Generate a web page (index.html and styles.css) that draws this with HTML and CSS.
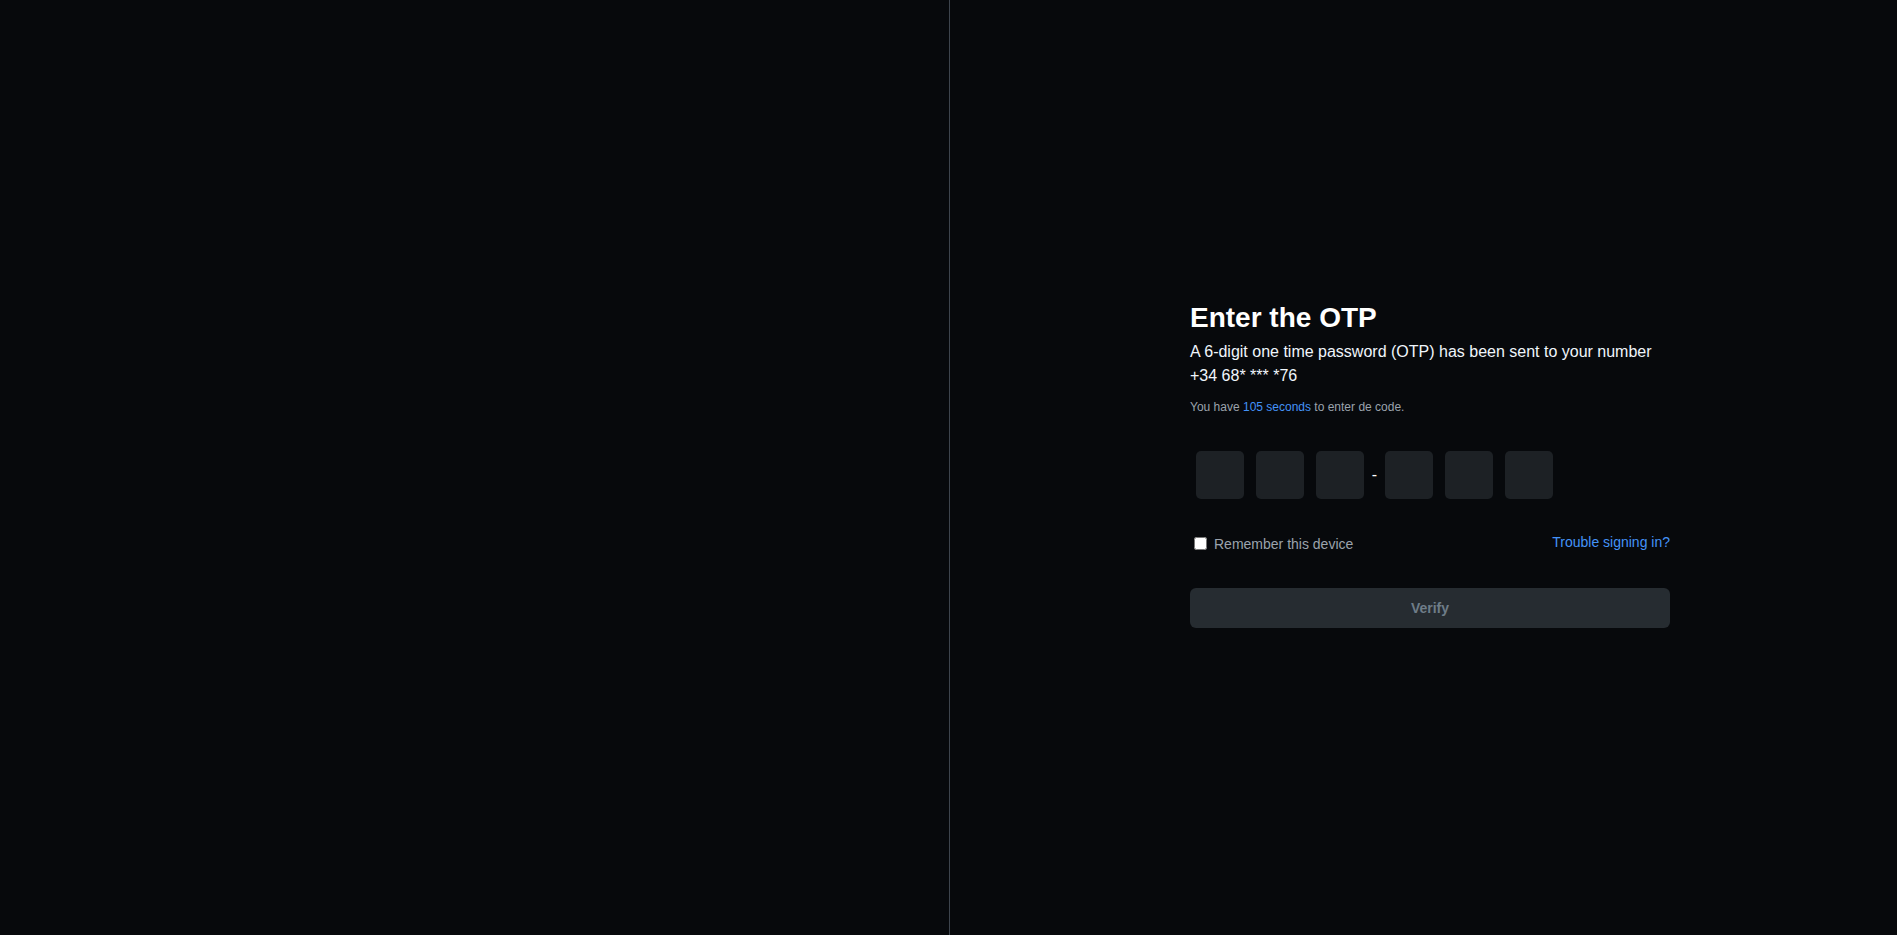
FILE: index.html
```html
<!DOCTYPE html>
<html lang="en">
<head>
<meta charset="utf-8">
<title>Enter the OTP</title>
<link rel="stylesheet" href="styles.css">
</head>
<body>
<div class="page">
  <div class="side"></div>
  <main class="panel">
    <form class="otp-card">
      <h1 class="title">Enter the OTP</h1>
      <p class="lead">A 6-digit one time password (OTP) has been sent to your number +34 68* *** *76</p>
      <p class="timer">You have <span class="accent">105 seconds</span> to enter de code.</p>
      <div class="code-row">
        <input class="digit" type="text" maxlength="1">
        <input class="digit" type="text" maxlength="1">
        <input class="digit" type="text" maxlength="1">
        <span class="sep">-</span>
        <input class="digit" type="text" maxlength="1">
        <input class="digit" type="text" maxlength="1">
        <input class="digit" type="text" maxlength="1">
      </div>
      <div class="options">
        <label class="remember"><input class="check" type="checkbox"><span>Remember this device</span></label>
        <a class="trouble" href="#">Trouble signing in?</a>
      </div>
      <button class="verify" type="button" disabled>Verify</button>
    </form>
  </main>
</div>
</body>
</html>
```
FILE: styles.css
```css
* { box-sizing: border-box; }
html, body {
  margin: 0;
  height: 100%;
  background: #07090c;
  font-family: "Liberation Sans", Arial, sans-serif;
}
.page {
  display: flex;
  height: 100vh;
}
.side {
  width: 950px;
  flex: 0 0 950px;
  border-right: 1px solid #3d444d;
}
.panel {
  flex: 1;
  display: flex;
  flex-direction: column;
  justify-content: center;
  align-items: center;
  padding-left: 13px;
  padding-bottom: 7px;
}
.otp-card {
  width: 480px;
  display: flex;
  flex-direction: column;
}
.title {
  margin: 0;
  font-size: 28px;
  line-height: 35px;
  font-weight: 700;
  color: #ffffff;
}
.lead {
  margin: 5px 0 0;
  font-size: 16px;
  line-height: 24px;
  color: #f0f6fc;
}
.timer {
  margin: 10px 0 0;
  font-size: 12px;
  line-height: 18px;
  color: #9ba3ad;
}
.accent { color: #4493f8; }
.code-row {
  display: flex;
  align-items: center;
  margin-top: 35px;
}
.digit {
  width: 48px;
  height: 48px;
  margin: 0 6px;
  border: 0;
  border-radius: 5px;
  background: #1d2125;
  color: #f0f6fc;
  font-size: 20px;
  text-align: center;
  outline: none;
  padding: 0;
}
.sep {
  width: 9px;
  text-align: center;
  color: #ffffff;
  font-size: 16px;
  line-height: 16px;
}
.options {
  display: flex;
  justify-content: space-between;
  align-items: center;
  margin-top: 37px;
  height: 16px;
}
.remember {
  display: flex;
  align-items: center;
  font-size: 14px;
  line-height: 16px;
  color: #9ba3ad;
}
.check {
  width: 13px;
  height: 13px;
  margin: 0 7px 2px 4px;
}
.trouble {
  font-size: 14px;
  line-height: 16px;
  color: #4493f8;
  text-decoration: none;
  margin-bottom: 4px;
}
.verify {
  margin-top: 36px;
  height: 40px;
  border: 0;
  border-radius: 6px;
  background: #262c31;
  color: #6e7d88;
  font-family: inherit;
  font-size: 14px;
  font-weight: 700;
}
```
